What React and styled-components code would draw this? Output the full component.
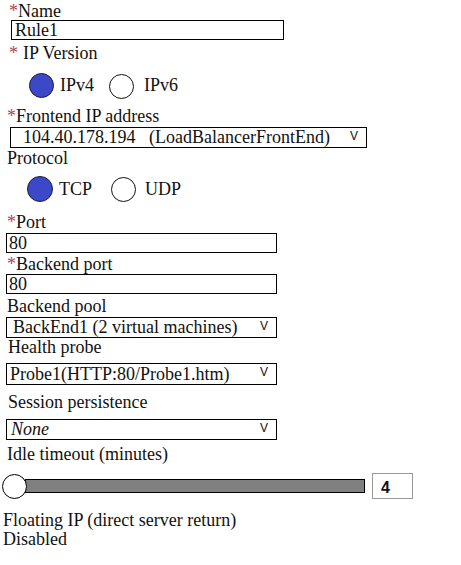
import React from "react";
import styled, { createGlobalStyle } from "styled-components";

const Global = createGlobalStyle`
  html, body { margin: 0; padding: 0; background: #fff; }
  body { font-family: "Liberation Serif", "Times New Roman", serif; color: #111; }
`;

const Page = styled.div`
  width: 461px;
  height: 565px;
  display: flex;
  flex-direction: column;
  align-items: flex-start;
  overflow: hidden;
`;

const Label = styled.div`
  font-size: 18px;
  line-height: 17px;
  height: 17px;
  white-space: nowrap;
  margin-top: ${(p) => p.$gap || 0}px;
  margin-left: ${(p) => p.$indent || 0}px;
`;

const Req = styled.span`
  color: #b3424f;
  margin-right: ${(p) => p.$space || 0}px;
`;

const TextBox = styled.div`
  box-sizing: border-box;
  border: 1px solid #000;
  height: ${(p) => p.$h || 20}px;
  width: ${(p) => p.$w}px;
  margin-top: ${(p) => p.$gap || 0}px;
  margin-left: ${(p) => p.$indent || 0}px;
  padding-left: ${(p) => p.$pad || 2}px;
  font-size: 18px;
  line-height: ${(p) => (p.$h || 20) - 2}px;
  white-space: nowrap;
`;

const SelectBox = styled.div`
  box-sizing: border-box;
  border: 1px solid #000;
  height: ${(p) => p.$h || 21}px;
  width: ${(p) => p.$w}px;
  margin-top: ${(p) => p.$gap || 0}px;
  margin-left: ${(p) => p.$indent || 0}px;
  padding-left: ${(p) => p.$pad || 3}px;
  padding-right: 8px;
  display: flex;
  align-items: center;
  justify-content: space-between;
  font-size: 18px;
  line-height: 19px;
  white-space: nowrap;
  font-style: ${(p) => (p.$italic ? "italic" : "normal")};
`;

const Caret = styled.span`
  font-family: "Liberation Sans", Arial, sans-serif;
  font-style: normal;
  font-size: 12px;
  line-height: 12px;
  margin-top: -4px;
`;

const RadioRow = styled.div`
  display: flex;
  align-items: center;
  height: 26px;
  margin-top: ${(p) => p.$gap || 0}px;
  margin-left: ${(p) => p.$indent || 0}px;
`;

const Radio = styled.span`
  box-sizing: border-box;
  display: inline-block;
  width: ${(p) => p.$size}px;
  height: ${(p) => p.$size}px;
  border-radius: 50%;
  border: 1px solid ${(p) => (p.$on ? "#1c1c3c" : "#111")};
  background: ${(p) => (p.$on ? "#3b48c8" : "#fff")};
  margin-top: ${(p) => p.$drop || 0}px;
  flex: none;
`;

const RadioText = styled.span`
  font-size: 18px;
  line-height: 17px;
  margin-left: ${(p) => p.$before}px;
  margin-right: ${(p) => p.$after || 0}px;
`;

const SliderRow = styled.div`
  display: flex;
  align-items: center;
  height: 26px;
  margin-top: ${(p) => p.$gap || 0}px;
  margin-left: 2px;
`;

const Thumb = styled.span`
  position: relative;
  z-index: 1;
  box-sizing: border-box;
  width: 25px;
  height: 25px;
  border-radius: 50%;
  border: 1px solid #000;
  background: #fff;
  flex: none;
`;

const Track = styled.span`
  box-sizing: border-box;
  width: 340px;
  height: 14px;
  margin-left: -2px;
  border: 1px solid #000;
  background: #808080;
  flex: none;
`;

const ValueBox = styled.span`
  box-sizing: border-box;
  width: 41px;
  height: 26px;
  margin-left: 7px;
  border: 1px solid #999;
  padding-left: 8px;
  font-family: "Liberation Sans", Arial, sans-serif;
  font-weight: bold;
  font-size: 16px;
  line-height: 27px;
  flex: none;
`;

export default function App() {
  return (
    <>
      <Global />
      <Page>
        <Label $gap={3} $indent={9}>
          <Req>*</Req>Name
        </Label>
        <TextBox $w={273} $indent={11} $pad={3}>
          Rule1
        </TextBox>

        <Label $gap={5} $indent={9}>
          <Req $space={5}>*</Req>IP Version
        </Label>
        <RadioRow $gap={10} $indent={29}>
          <Radio $size={25} $on />
          <RadioText $before={6} $after={15}>IPv4</RadioText>
          <Radio $size={25} $drop={2} />
          <RadioText $before={10}>IPv6</RadioText>
        </RadioRow>

        <Label $gap={10} $indent={7}>
          <Req>*</Req>Frontend IP address
        </Label>
        <SelectBox $gap={2} $indent={10} $w={357} $pad={12}>
          <span>104.40.178.194&nbsp;&nbsp; (LoadBalancerFrontEnd)</span>
          <Caret>V</Caret>
        </SelectBox>

        <Label $gap={2} $indent={7}>
          Protocol
        </Label>
        <RadioRow $gap={9} $indent={27}>
          <Radio $size={26} $on />
          <RadioText $before={6} $after={19}>TCP</RadioText>
          <Radio $size={25} $drop={1} />
          <RadioText $before={9}>UDP</RadioText>
        </RadioRow>

        <Label $gap={12} $indent={7}>
          <Req>*</Req>Port
        </Label>
        <TextBox $gap={2} $indent={6} $w={271} $pad={2}>
          80
        </TextBox>

        <Label $gap={3} $indent={7}>
          <Req>*</Req>Backend port
        </Label>
        <TextBox $gap={1} $indent={6} $w={271} $pad={2}>
          80
        </TextBox>

        <Label $gap={4} $indent={7}>
          Backend pool
        </Label>
        <SelectBox $gap={2} $indent={6} $w={271} $pad={6}>
          <span>BackEnd1 (2 virtual machines)</span>
          <Caret>V</Caret>
        </SelectBox>

        <Label $gap={1} $indent={8}>
          Health probe
        </Label>
        <SelectBox $gap={7} $indent={6} $w={271} $h={22} $pad={3}>
          <span>Probe1(HTTP:80/Probe1.htm)</span>
          <Caret>V</Caret>
        </SelectBox>

        <Label $gap={9} $indent={8}>
          Session persistence
        </Label>
        <SelectBox $gap={8} $indent={6} $w={271} $pad={4} $italic>
          <span>None</span>
          <Caret>V</Caret>
        </SelectBox>

        <Label $gap={6} $indent={7}>
          Idle timeout (minutes)
        </Label>
        <SliderRow $gap={10}>
          <Thumb />
          <Track />
          <ValueBox>4</ValueBox>
        </SliderRow>

        <Label $gap={13} $indent={3}>
          Floating IP (direct server return)
        </Label>
        <Label $gap={2} $indent={3}>
          Disabled
        </Label>
      </Page>
    </>
  );
}
